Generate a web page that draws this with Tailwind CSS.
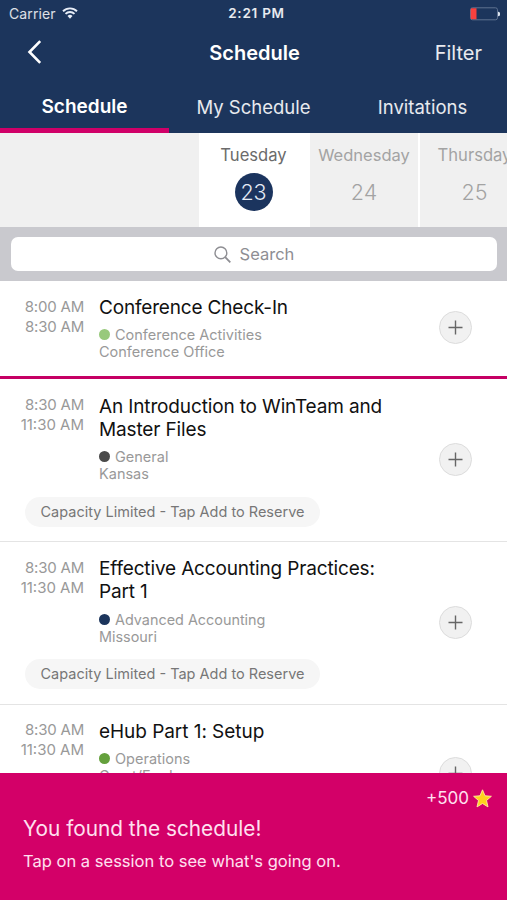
<!DOCTYPE html>
<html lang="en">
<head>
<meta charset="utf-8">
<title>Schedule</title>
<script src="https://cdn.jsdelivr.net/npm/@tailwindcss/browser@4"></script>
</head>
<body class="bg-white">
<div class="relative w-[507px] h-[900px] overflow-hidden bg-white font-[Inter,sans-serif] whitespace-nowrap">
  <header class="h-[133px] bg-[#1c355c] text-white flex flex-col">
    <div class="h-[27px] flex items-center justify-between pl-[9px] pr-[7px] text-[14px]">
      <div class="flex-1 flex items-center gap-[6px] text-white/85"><span class="tracking-[0.1px]">Carrier</span>
        <svg class="w-4 h-3 -mt-0.5" viewBox="0 0 16 12" fill="none" stroke="#e8eef8" stroke-width="1.9"><path d="M1 4.2a10 10 0 0 1 14 0M3.5 6.9a6.4 6.4 0 0 1 9 0"/><path d="M5.5 9a3.7 3.7 0 0 1 5 0L8 11.7z" fill="#e8eef8" stroke="none"/></svg>
      </div>
      <div class="text-[13.5px] font-semibold text-white/90 tracking-[0.75px] pl-1">2:21 PM</div>
      <div class="flex-1 flex justify-end"><svg class="w-[31px] h-[14px]" viewBox="0 0 31 14"><rect x="1.5" y=".8" width="27" height="12" rx="2" fill="none" stroke="#5f7291"/><path d="M3 1.3h4.5v11H3a1.3 1.3 0 0 1-1.3-1.3V2.6A1.3 1.3 0 0 1 3 1.3z" fill="#f8413e"/><path d="M29 4.8a2.2 2.2 0 0 1 0 4.4z" fill="#dce4ee"/></svg></div>
    </div>
    <div class="h-[51px] flex items-center justify-between pl-[27px] pr-[25px] text-[20px]">
      <div class="flex-1"><svg class="w-4 h-6 -mt-0.5" viewBox="0 0 16 24" fill="none" stroke="#fff" stroke-width="2.6"><path d="M13.2 1.2L2.5 12l10.7 10.8"/></svg></div>
      <h1 class="font-semibold text-[20px]">Schedule</h1>
      <div class="flex-1 text-right text-white/90">Filter</div>
    </div>
    <nav class="h-[55px] grid grid-cols-3 text-center text-[18.5px] text-white/90">
      <div class="border-b-[5px] border-[#d00068] pt-[15px] leading-7 font-semibold text-[19px] text-white">Schedule</div>
      <div class="pt-[15px] leading-7">My Schedule</div>
      <div class="pt-[15px] leading-7">Invitations</div>
    </nav>
  </header>

  <section class="h-[94px] flex bg-[#f0f0f0] text-center text-[#a3a3a3]">
    <div class="w-[199px] shrink-0"></div>
    <div class="w-[111px] shrink-0 bg-white pt-[10px] pr-[2px] flex flex-col items-center text-[#6b6b6b]"><span class="text-[16.6px] leading-6">Tuesday</span><span class="mt-[6px] size-[38px] rounded-full bg-[#1b345e] text-[#e4ebf5] text-[21.5px] leading-[38px] font-light">23</span></div>
    <div class="w-[110px] shrink-0 border-r-2 border-white pt-[10px] flex flex-col items-center"><span class="text-[16.5px] leading-6">Wednesday</span><span class="mt-[6px] text-[21.5px] leading-[38px] font-light">24</span></div>
    <div class="w-[110px] shrink-0 pt-[10px] pr-px flex flex-col items-center"><span class="text-[16.6px] leading-6">Thursday</span><span class="mt-[6px] text-[21.5px] leading-[38px] font-light">25</span></div>
  </section>

  <section class="h-[54px] bg-[#c9c9ce] pt-[10px] pl-[11px] pr-[10px]">
    <div class="h-[34px] rounded-[7px] bg-white flex items-center justify-center gap-[9px] text-[#8e8e93] text-[16.5px]">
      <svg class="w-[17px] h-[17px]" viewBox="0 0 17 17" fill="none" stroke="#8e8e93" stroke-width="1.4"><circle cx="6.9" cy="6.9" r="5.9"/><path d="M11.2 11.2l5.1 5.1" stroke-width="1.8"/></svg>
      <span>Search</span>
    </div>
  </section>

  <main>
    <article class="h-[98px] border-b-[3px] border-[#c50064] pt-[15px] flex pr-[35px]">
      <div class="w-[84px] pt-px text-right text-[15px] leading-5 text-[#999] tracking-[-0.2px]">8:00 AM<br>8:30 AM</div>
      <div class="flex-1 pl-[15px]">
        <h2 class="text-[19px] leading-[23px] tracking-[-0.17px] text-[#111]">Conference Check-In</h2>
        <div class="mt-[7px] text-[14.5px] leading-[17px] text-[#999]"><div class="flex items-center gap-[5px]"><i class="size-[11px] rounded-full bg-[#98c97c]"></i>Conference Activities</div>Conference Office</div>
      </div>
      <button class="mt-[15px] size-[33px] rounded-full border border-[#dcdcdc] bg-[#f1f1f1] grid place-items-center"><svg class="size-[15px]" viewBox="0 0 15 15" stroke="#666" stroke-width="1.4"><path d="M.5 7.5h14M7.5.5v14"/></svg></button>
    </article>

    <article class="h-[163px] border-b border-[#e4e4e4] pt-[16px]">
      <div class="flex pr-[35px]">
        <div class="w-[84px] text-right text-[15px] leading-5 text-[#999]"><span class="tracking-[-0.2px]">8:30 AM</span><br>11:30 AM</div>
        <div class="flex-1 pl-[15px]">
          <h2 class="text-[19px] leading-[23px] tracking-[-0.14px] text-[#111]">An Introduction to WinTeam and<br>Master Files</h2>
          <div class="mt-[7px] text-[14.5px] leading-[17px] text-[#999]"><div class="flex items-center gap-[5px]"><i class="size-[11px] rounded-full bg-[#4a4a4a]"></i>General</div>Kansas</div>
        </div>
        <button class="mt-[48px] size-[33px] rounded-full border border-[#dcdcdc] bg-[#f1f1f1] grid place-items-center"><svg class="size-[15px]" viewBox="0 0 15 15" stroke="#666" stroke-width="1.4"><path d="M.5 7.5h14M7.5.5v14"/></svg></button>
      </div>
      <div class="mt-[15px] ml-[25px] w-[295px] h-[30px] rounded-full bg-[#f6f6f6] text-center text-[14.5px] leading-[30px] text-[#777]">Capacity Limited - Tap Add to Reserve</div>
    </article>

    <article class="h-[163px] border-b border-[#e4e4e4] pt-[15px]">
      <div class="flex pr-[35px]">
        <div class="w-[84px] pt-px text-right text-[15px] leading-5 text-[#999]"><span class="tracking-[-0.2px]">8:30 AM</span><br>11:30 AM</div>
        <div class="flex-1 pl-[15px]">
          <h2 class="text-[19px] leading-[23px] tracking-[-0.15px] text-[#111]">Effective Accounting Practices:<br>Part 1</h2>
          <div class="mt-[8px] text-[14.4px] leading-[17px] text-[#999]"><div class="flex items-center gap-[5px]"><i class="size-[11px] rounded-full bg-[#1c355c]"></i>Advanced Accounting</div>Missouri</div>
        </div>
        <button class="mt-[49px] size-[33px] rounded-full border border-[#dcdcdc] bg-[#f1f1f1] grid place-items-center"><svg class="size-[15px]" viewBox="0 0 15 15" stroke="#666" stroke-width="1.4"><path d="M.5 7.5h14M7.5.5v14"/></svg></button>
      </div>
      <div class="mt-[14px] ml-[25px] w-[295px] h-[30px] rounded-full bg-[#f6f6f6] text-center text-[14.5px] leading-[30px] text-[#777]">Capacity Limited - Tap Add to Reserve</div>
    </article>

    <article class="pt-[15px] flex pr-[35px]">
      <div class="w-[84px] text-right text-[15px] leading-5 text-[#999]"><span class="tracking-[-0.2px]">8:30 AM</span><br>11:30 AM</div>
      <div class="flex-1 pl-[15px]">
        <h2 class="text-[19px] leading-[23px] tracking-[-0.05px] text-[#111]">eHub Part 1: Setup</h2>
        <div class="mt-[7px] text-[14.5px] leading-[17px] text-[#999]"><div class="flex items-center gap-[5px]"><i class="size-[11px] rounded-full bg-[#64a03c]"></i>Operations</div>Grant/Ford</div>
      </div>
      <button class="mt-[37px] size-[33px] rounded-full border border-[#dcdcdc] bg-[#f1f1f1] grid place-items-center"><svg class="size-[15px]" viewBox="0 0 15 15" stroke="#666" stroke-width="1.4"><path d="M.5 7.5h14M7.5.5v14"/></svg></button>
    </article>
  </main>

  <aside class="absolute inset-x-0 bottom-0 h-[127px] bg-[#d30068] text-[#ffe0f0] pl-[23px] pr-[15px] pt-[14px]">
    <div class="h-[23px] flex items-center justify-end gap-[4px] text-[17px]"><span>+500</span><svg class="size-[19px]" viewBox="0 0 19 19"><path d="M9.5 .8l2.5 6 6.4.5-4.9 4.2 1.5 6.4-5.5-3.4L4 17.9l1.5-6.4L.6 7.3 7 6.8z" fill="#ffd21c" stroke="#ffeaa0" stroke-width=".9" stroke-linejoin="round"/></svg></div>
    <div class="mt-[5px] text-[20.8px] leading-[28px]">You found the schedule!</div>
    <div class="mt-[7px] text-[16.55px] leading-[22px]">Tap on a session to see what's going on.</div>
  </aside>
</div>
</body>
</html>
